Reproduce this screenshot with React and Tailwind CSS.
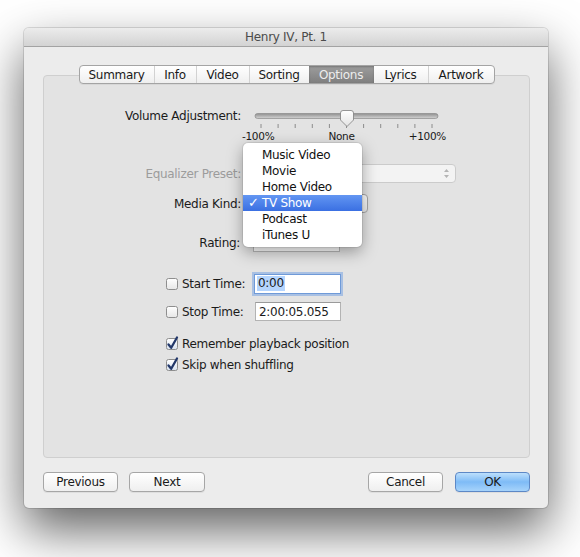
const tabs = [
  ['Summary', 74],
  ['Info', 42],
  ['Video', 53],
  ['Sorting', 60],
  ['Options', 65],
  ['Lyrics', 54],
  ['Artwork', 66],
];

const kinds = ['Music Video', 'Movie', 'Home Video', 'TV Show', 'Podcast', 'iTunes U'];

function Checkbox({ checked }) {
  return (
    <svg width="14" height="14" viewBox="0 0 14 14" className="shrink-0 overflow-visible">
      <defs>
        <linearGradient id={checked ? 'cbOn' : 'cbOff'} x1="0" y1="0" x2="0" y2="1">
          <stop offset="0" stopColor="#ffffff" />
          <stop offset="1" stopColor={checked ? '#d9e2ee' : '#e6e6e6'} />
        </linearGradient>
      </defs>
      <rect x="1.5" y="1.5" width="11" height="11" rx="2" fill={`url(#${checked ? 'cbOn' : 'cbOff'})`} stroke="#8e8e8e" />
      {checked && (
        <path d="M3.5 7.5 L6.2 10.8 L12 0.5" fill="none" stroke="#23386a" strokeWidth="2.3" strokeLinecap="round" strokeLinejoin="round" />
      )}
    </svg>
  );
}

function Slider() {
  const ticks = Array.from({ length: 11 }, (_, i) => 11 + i * 17.1);
  return (
    <svg width="196" height="24" viewBox="0 0 196 24" className="ml-[9px]">
      <defs>
        <linearGradient id="track" x1="0" y1="0" x2="0" y2="1">
          <stop offset="0" stopColor="#8f8f8f" />
          <stop offset="1" stopColor="#d4d4d4" />
        </linearGradient>
        <linearGradient id="knob" x1="0" y1="0" x2="0" y2="1">
          <stop offset="0" stopColor="#ffffff" />
          <stop offset="1" stopColor="#e2e2e2" />
        </linearGradient>
      </defs>
      <rect x="5" y="7.5" width="183" height="5" rx="2.5" fill="url(#track)" stroke="#8a8a8a" strokeWidth="0.7" />
      {ticks.map((x) => (
        <line key={x} x1={x} y1="18" x2={x} y2="22" stroke="#8c8c8c" strokeWidth="1" />
      ))}
      <path d="M90.5 7 Q90.5 4.5 93 4.5 L101 4.5 Q103.5 4.5 103.5 7 L103.5 14 L97 20.5 L90.5 14 Z" fill="url(#knob)" stroke="#7d7d7d" strokeWidth="0.8" />
    </svg>
  );
}

function Button({ children, primary, className }) {
  return (
    <button
      className={
        (primary
          ? 'border-[#5d88c6] bg-linear-to-b from-[#bcdffc] via-[#7ebbf6] to-[#a6d3fb] '
          : 'border-[#a6a6a6] bg-linear-to-b from-white to-[#efefef] ') +
        'h-[20px] rounded-[4px] border leading-[18px] text-[#1a1a1a] shadow-[0_1px_0_rgba(0,0,0,0.06)] ' +
        className
      }
    >
      {children}
    </button>
  );
}

export default function App() {
  return (
    <div className="w-[580px] h-[557px] bg-white overflow-hidden pt-[28px] pl-[24px] font-['DejaVu_Sans',Verdana,sans-serif] text-[12px] tracking-[-0.3px] text-[#1b1b1b]">
      <div className="w-[524px] h-[480px] flex flex-col rounded-[5px] bg-[#ececec] shadow-[0_22px_50px_rgba(0,0,0,0.62),0_0_0_1px_rgba(0,0,0,0.12)] overflow-hidden">
        <div className="h-[19px] shrink-0 flex items-center justify-center bg-linear-to-b from-[#ececec] to-[#d3d3d3] border-b border-[#a3a3a3] text-[#4b4b4b] leading-none">
          Henry IV, Pt. 1
        </div>

        <div className="flex-1 flex flex-col pl-[19px] pr-[18px]">
          <div className="relative mt-[28px] h-[383px] rounded-[4px] border border-[#cfcfcf] bg-[#e3e3e3]">
            {/* tabs */}
            <div className="flex justify-center -mt-[11px]">
              <div className="flex h-[19px] rounded-[4px] border border-[#a4a4a4] bg-linear-to-b from-white to-[#efefef] overflow-hidden shadow-[0_1px_0_rgba(0,0,0,0.05)]">
                {tabs.map(([name, w], i) => {
                  const sel = name === 'Options';
                  const divider = i > 0 && name !== 'Options' && tabs[i - 1][0] !== 'Options';
                  return (
                    <div
                      key={name}
                      style={{ width: w }}
                      className={
                        (sel
                          ? 'bg-linear-to-b from-[#9d9d9d] to-[#7f7f7f] text-[#ededed] shadow-[inset_0_1px_2px_rgba(0,0,0,0.25)] '
                          : 'text-[#1a1a1a] ') +
                        (divider ? 'border-l border-[#d2d2d2] ' : '') +
                        'h-full flex items-center justify-center leading-none'
                      }
                    >
                      {name}
                    </div>
                  );
                })}
              </div>
            </div>

            {/* volume */}
            <div className="mt-[22px] flex">
              <div className="w-[197px] h-[20px] leading-[20px] text-right">Volume Adjustment:</div>
              <Slider />
            </div>
            <div className="ml-[198px] w-[204px] flex justify-between text-[10.5px] leading-[12px] text-[#1a1a1a]">
              <span>-100%</span>
              <span>None</span>
              <span>+100%</span>
            </div>

            {/* equalizer */}
            <div className="mt-[22px] h-[19px] flex items-center">
              <div className="w-[197px] text-right text-[#9c9c9c]">Equalizer Preset:</div>
              <div className="ml-[12px] w-[203px] h-[19px] rounded-[4px] border border-[#cbcbcb] bg-[#f3f3f3] flex items-center justify-end pr-[5px]">
                <svg width="7" height="11" viewBox="0 0 7 11">
                  <path d="M3.5 1 L6 4 L1 4 Z M3.5 10 L6 7 L1 7 Z" fill="#b4b4b4" />
                </svg>
              </div>
            </div>

            {/* media kind */}
            <div className="mt-[11px] h-[19px] flex items-center">
              <div className="w-[197px] text-right">Media Kind:</div>
              <div className="ml-[12px] w-[115px] h-[19px] rounded-[4px] border border-[#a7a7a7] bg-linear-to-b from-white to-[#ececec]" />
            </div>

            {/* rating */}
            <div className="mt-[20px] h-[19px] flex items-center">
              <div className="w-[196px] text-right">Rating:</div>
              <div className="ml-[13px] w-[87px] h-[19px] border border-[#b8b8b8] bg-white" />
            </div>

            {/* start time */}
            <div className="mt-[22px] h-[19px] flex items-center pl-[121px]">
              <div className="w-[89px] flex items-center gap-[3px]">
                <Checkbox />
                <span>Start Time:</span>
              </div>
              <div className="w-[87px] h-[20px] flex items-center pl-[2px] border border-[#6f9ad8] bg-white shadow-[0_0_0_2px_rgba(120,164,228,0.55)]">
                <span className="bg-[#b5d5fe] px-[1px] leading-[15px]">0:00</span>
              </div>
            </div>

            {/* stop time */}
            <div className="mt-[9px] h-[19px] flex items-center pl-[121px]">
              <div className="w-[90px] flex items-center gap-[3px]">
                <Checkbox />
                <span>Stop Time:</span>
              </div>
              <div className="w-[86px] h-[19px] flex items-center pl-[3px] border border-[#b3b3b3] border-t-[#9a9a9a] bg-white">
                2:00:05.055
              </div>
            </div>

            {/* options */}
            <div className="mt-[15px] h-[16px] flex items-center pl-[121px] gap-[3px]">
              <Checkbox checked />
              <span>Remember playback position</span>
            </div>
            <div className="mt-[5px] h-[16px] flex items-center pl-[121px] gap-[3px]">
              <Checkbox checked />
              <span>Skip when shuffling</span>
            </div>

            {/* open media kind menu */}
            <div className="absolute left-[199px] top-[67px] w-[119px] rounded-[5px] bg-white py-[4px] shadow-[0_5px_16px_rgba(0,0,0,0.35),0_0_0_1px_rgba(0,0,0,0.08)]">
              {kinds.map((k) => {
                const sel = k === 'TV Show';
                return (
                  <div
                    key={k}
                    className={
                      (sel ? 'bg-linear-to-b from-[#6396f2] to-[#3a6fe2] text-white ' : 'text-[#111] ') +
                      'relative h-[16px] leading-[16px] pl-[19px]'
                    }
                  >
                    {sel && <span className="absolute left-[5px] top-0 text-[13px] font-bold">✓</span>}
                    {k}
                  </div>
                );
              })}
            </div>
          </div>

          {/* buttons */}
          <div className="mt-[14px] flex">
            <Button className="w-[75px]">Previous</Button>
            <Button className="ml-[11px] w-[76px]">Next</Button>
            <div className="flex-1" />
            <Button className="w-[75px]">Cancel</Button>
            <Button primary className="ml-[12px] w-[75px]">OK</Button>
          </div>
        </div>
      </div>
    </div>
  );
}
